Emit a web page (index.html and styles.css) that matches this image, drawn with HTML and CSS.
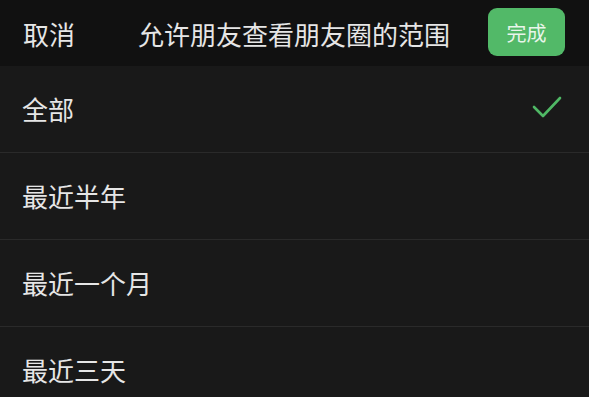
FILE: index.html
```html
<!DOCTYPE html>
<html lang="zh-CN">
<head>
  <meta charset="UTF-8" />
  <meta name="viewport" content="width=device-width, initial-scale=1.0" />
  <title>允许朋友查看朋友圈的范围</title>
  <link rel="stylesheet" href="styles.css">
</head>
<body>
  <div class="header">
    <span class="cancel">取消</span>
    <span class="title">允许朋友查看朋友圈的范围</span>
    <button class="btn-done" type="button">完成</button>
  </div>

  <ul class="options">
    <li class="option">
      <span>全部</span>
      <svg class="check" width="30" height="24" viewBox="0 0 30 24">
        <path d="M2 12 L11 21 L28 3" fill="none" stroke="#4fb865" stroke-width="2.6" stroke-linecap="round" stroke-linejoin="round"/>
      </svg>
    </li>
    <li class="option"><span>最近半年</span></li>
    <li class="option"><span>最近一个月</span></li>
    <li class="option"><span>最近三天</span></li>
  </ul>
</body>
</html>
```

FILE: styles.css
```css
body {
  margin: 0;
  padding: 0;
  background-color: #191919;
  color: #e6e6e6;
  font-family: "Noto Sans CJK SC", "Noto Sans", sans-serif;
  overflow: hidden;
}

.header {
  height: 66px;
  background-color: #111111;
  display: flex;
  align-items: center;
  padding: 0 24px 0 23px;
  box-sizing: border-box;
}

.cancel {
  font-size: 26px;
  width: 115px;
}

.title {
  flex: 1;
  font-size: 26px;
}

.btn-done {
  width: 77px;
  height: 48px;
  margin-top: -2px;
  border: none;
  border-radius: 9px;
  background-color: #52b968;
  color: #e8f5ea;
  font-family: inherit;
  font-size: 20px;
  padding: 0;
}

.options {
  list-style: none;
  margin: 0;
  padding: 0;
}

.option {
  height: 86px;
  display: flex;
  align-items: center;
  justify-content: space-between;
  padding: 0 27px 0 22px;
  font-size: 26px;
  border-bottom: 1.5px solid #2a2a2a;
}

.option span {
  margin-top: -2px;
}

.check {
  margin-top: -4px;
}
```
